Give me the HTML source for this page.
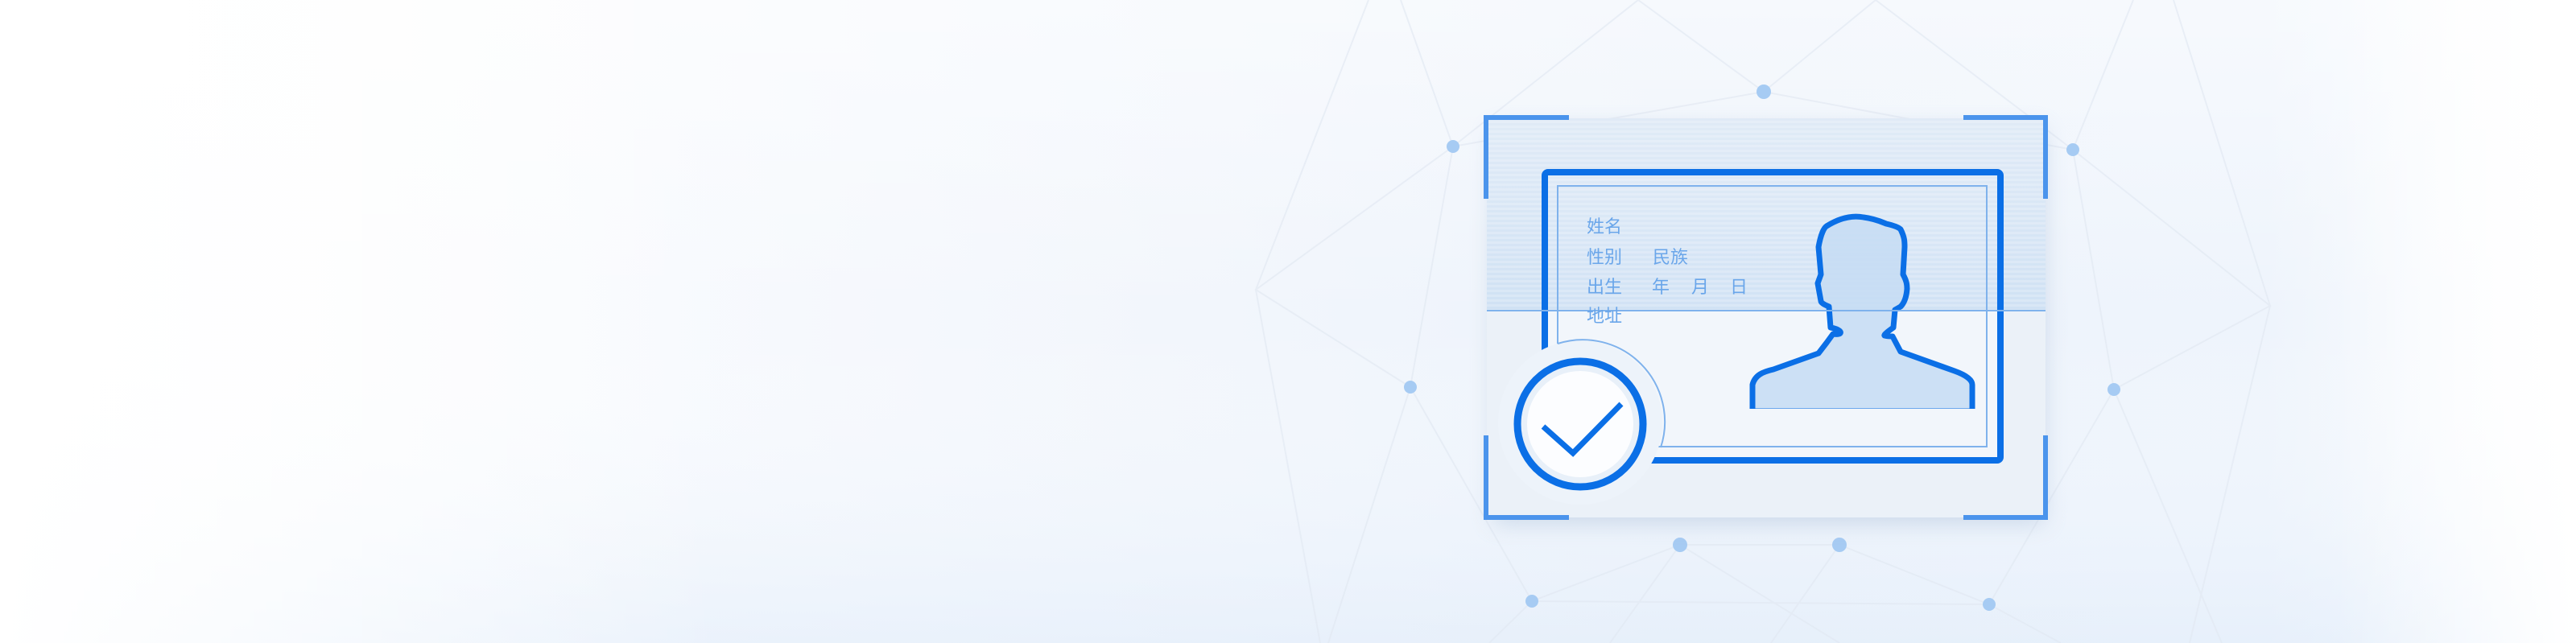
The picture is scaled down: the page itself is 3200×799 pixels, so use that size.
<!DOCTYPE html>
<html><head><meta charset="utf-8"><style>
html,body{margin:0;padding:0;width:3200px;height:799px;overflow:hidden;background:#fff}
svg{display:block}
text{font-family:"Liberation Sans","Noto Sans CJK SC",sans-serif;fill:#6aa6ea;font-size:22px}
</style></head><body>
<svg width="3200" height="799" viewBox="0 0 3200 799" xmlns="http://www.w3.org/2000/svg">
<defs>
<linearGradient id="bgx" x1="0" x2="1" y1="0" y2="0">
<stop offset="0" stop-color="#ffffff"/>
<stop offset="0.35" stop-color="#f5f8fd"/>
<stop offset="0.65" stop-color="#edf3fb"/>
<stop offset="0.88" stop-color="#eef4fc"/>
<stop offset="1" stop-color="#ffffff"/>
</linearGradient>
<linearGradient id="bgy" x1="0" x2="0" y1="0" y2="1">
<stop offset="0" stop-color="#ffffff" stop-opacity="0.5"/>
<stop offset="0.5" stop-color="#ffffff" stop-opacity="0"/>
<stop offset="1" stop-color="#e2edfa" stop-opacity="0.6"/>
</linearGradient>
<linearGradient id="fadeL" x1="0" x2="1">
<stop offset="0" stop-color="#fff" stop-opacity="1"/>
<stop offset="1" stop-color="#fff" stop-opacity="0"/>
</linearGradient>
<linearGradient id="fadeR" x1="0" x2="1">
<stop offset="0" stop-color="#fff" stop-opacity="0"/>
<stop offset="1" stop-color="#fff" stop-opacity="1"/>
</linearGradient>
<pattern id="stripes" width="10" height="6" patternUnits="userSpaceOnUse">
<rect width="10" height="3" fill="#ffffff" opacity="0.4"/>
</pattern>
<linearGradient id="band" x1="0" x2="0" y1="0" y2="1">
<stop offset="0" stop-color="#d8e6f5" stop-opacity="0.7"/>
<stop offset="1" stop-color="#c9ddf3" stop-opacity="0.95"/>
</linearGradient>
<filter id="sh" x="-20%" y="-20%" width="140%" height="140%"><feGaussianBlur stdDeviation="14"/></filter>
</defs>
<rect width="3200" height="799" fill="url(#bgx)"/>
<rect width="3200" height="799" fill="url(#bgy)"/>
<g stroke="#e1e8f2" stroke-width="2" fill="none" opacity="0.6">
<path d="M2035 0 L1805 182 L1752 481 L1903 747 L2087 677 L2285 677 L2471 751 L2626 484 L2575 186 L2330 0"/>
<path d="M2035 0 L2191 114 L2330 0 M2191 114 L1805 182 M2191 114 L2575 186 M1805 182 L1560 360 L1752 481 M2575 186 L2820 380 L2626 484"/>
<path d="M2087 677 L2000 799 M2087 677 L2285 799 M2285 677 L2200 799 M1903 747 L1850 799 M2471 751 L2560 799 M1903 747 L2471 751"/>
<path d="M1700 0 L1560 360 L1640 799 M2700 0 L2820 380 L2720 799 M1752 481 L1650 799 M2626 484 L2760 799 M1805 182 L1740 0 M2575 186 L2650 0"/>
</g>
<rect x="0" y="0" width="900" height="799" fill="url(#fadeL)"/>
<rect x="2900" y="0" width="300" height="799" fill="url(#fadeR)"/>
<g fill="#a6cbf3">
<ellipse cx="2191" cy="114" rx="9" ry="9"/>
<ellipse cx="1805" cy="182" rx="8" ry="8"/>
<ellipse cx="2575" cy="186" rx="8" ry="8"/>
<ellipse cx="1752" cy="481" rx="8" ry="8"/>
<ellipse cx="2626" cy="484" rx="8" ry="8"/>
<ellipse cx="2087" cy="677" rx="9" ry="9"/>
<ellipse cx="2285" cy="677" rx="9" ry="9"/>
<ellipse cx="1903" cy="747" rx="8" ry="8"/>
<ellipse cx="2471" cy="751" rx="8" ry="8"/>
</g>
<rect x="1855" y="160" width="684" height="490" fill="#9fb6d3" opacity="0.45" filter="url(#sh)"/>
<rect x="1847" y="147" width="694" height="496" fill="#ebf1f8"/>
<rect x="1919" y="214" width="566" height="358" rx="4" fill="#f2f6fb"/>
<rect x="1847" y="147" width="694" height="239" fill="url(#band)" opacity="0.85"/>
<rect x="1847" y="147" width="694" height="239" fill="url(#stripes)" opacity="0.5"/>
<rect x="1919" y="214" width="566" height="358" rx="4" fill="none" stroke="#0b6fe6" stroke-width="8"/>
<rect x="1935" y="231" width="533" height="324" fill="none" stroke="#7fb2ec" stroke-width="2"/>
<path d="M2177 511 L2177 478 C2180 466 2190 462 2203 459 L2259 439 L2269 426 L2277 415 C2290 417 2290 410 2274 407 L2272 381 C2265 378 2262 376 2262 374 L2258 352 L2262 341 L2259 307 C2262 290 2266 283 2269 281 C2290 268 2305 268 2315 270 C2330 272 2338 276 2343 278 C2352 280 2358 282 2361 285 C2366 295 2366 300 2366 307 L2364 341 C2369 350 2369 355 2369 359 C2368 372 2364 378 2361 381 L2354 385 L2352 407 C2345 412 2340 416 2341 417 C2345 418 2348 418 2351 418 L2361 437 L2428 461 C2442 466 2450 472 2450 478 L2450 511 Z" fill="#c6dcf3" fill-opacity="0.85" stroke="#0b6fe6" stroke-width="7" stroke-linejoin="round"/>
<rect x="2173" y="508" width="282" height="10" fill="#f2f6fb"/>
<line x1="1847" y1="386" x2="2541" y2="386" stroke="#7fb2ec" stroke-width="2"/>
<text x="1971" y="289">姓名</text>
<text x="1971" y="327">性别</text>
<text x="2053" y="327">民族</text>
<text x="1971" y="364">出生</text>
<text x="2052" y="364">年</text>
<text x="2101" y="364">月</text>
<text x="2149" y="364">日</text>
<text x="1971" y="400">地址</text>
<circle cx="1963" cy="525" r="102" fill="#edf3fa"/>
<path d="M1935 427 A102 102 0 0 1 2063 556" fill="none" stroke="#7fb2ec" stroke-width="2"/>
<circle cx="1963" cy="527" r="78" fill="#e8f0f9" stroke="#0b6fe6" stroke-width="9"/>
<circle cx="1963" cy="527" r="66" fill="#fcfdff"/>
<path d="M1917 530 L1954 563 L2014 502" fill="none" stroke="#0b6fe6" stroke-width="7"/>
<g fill="none" stroke="#4b94ec" stroke-width="6">
<path d="M1846 247 L1846 146 L1949 146"/>
<path d="M2439 146 L2541 146 L2541 247"/>
<path d="M1846 541 L1846 643 L1949 643"/>
<path d="M2439 643 L2541 643 L2541 541"/>
</g>
</svg>
</body></html>
